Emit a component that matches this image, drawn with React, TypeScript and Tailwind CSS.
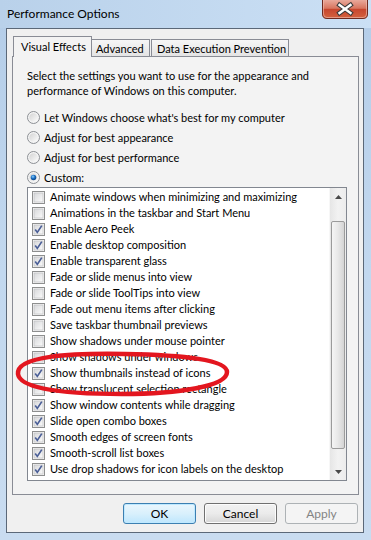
import type React from "react";

interface Effect {
	label: string;
	on: boolean;
}

const effects: Effect[] = [
	{ label: "Animate windows when minimizing and maximizing", on: false },
	{ label: "Animations in the taskbar and Start Menu", on: false },
	{ label: "Enable Aero Peek", on: true },
	{ label: "Enable desktop composition", on: true },
	{ label: "Enable transparent glass", on: true },
	{ label: "Fade or slide menus into view", on: false },
	{ label: "Fade or slide ToolTips into view", on: false },
	{ label: "Fade out menu items after clicking", on: false },
	{ label: "Save taskbar thumbnail previews", on: false },
	{ label: "Show shadows under mouse pointer", on: false },
	{ label: "Show shadows under windows", on: false },
	{ label: "Show thumbnails instead of icons", on: true },
	{ label: "Show translucent selection rectangle", on: false },
	{ label: "Show window contents while dragging", on: true },
	{ label: "Slide open combo boxes", on: true },
	{ label: "Smooth edges of screen fonts", on: true },
	{ label: "Smooth-scroll list boxes", on: true },
	{ label: "Use drop shadows for icon labels on the desktop", on: true },
];

const choices = [
	"Let Windows choose what's best for my computer",
	"Adjust for best appearance",
	"Adjust for best performance",
	"Custom:",
];

const CloseButton: React.FC = () => (
	<svg width="46" height="19" viewBox="0 0 46 19" className="mr-[3px] shrink-0">
		<defs>
			<linearGradient id="closeBg" x1="0" y1="0" x2="0" y2="1">
				<stop offset="0" stopColor="#e9a99b" />
				<stop offset="0.45" stopColor="#d8755f" />
				<stop offset="0.5" stopColor="#c7462e" />
				<stop offset="1" stopColor="#d5633f" />
			</linearGradient>
		</defs>
		<path
			d="M0.5 0 V14 Q0.5 18.5 5 18.5 H41 Q45.5 18.5 45.5 14 V0"
			fill="url(#closeBg)"
			stroke="#6e2a20"
		/>
		<path
			d="M1.5 0 V14 Q1.5 17.5 5 17.5 H41 Q44.5 17.5 44.5 14 V0"
			fill="none"
			stroke="#f0c2b6"
			strokeOpacity="0.6"
		/>
		<path
			d="M17.5 5 L28.5 13 M28.5 5 L17.5 13"
			stroke="#3b3b3b"
			strokeWidth="4.6"
			strokeLinecap="square"
		/>
		<path
			d="M17.5 5 L28.5 13 M28.5 5 L17.5 13"
			stroke="#ffffff"
			strokeWidth="2.4"
			strokeLinecap="square"
		/>
	</svg>
);

const Radio: React.FC<{ checked: boolean }> = ({ checked }) => (
	<svg width="13" height="13" viewBox="0 0 13 13" className="shrink-0">
		<defs>
			<linearGradient id="radioBg" x1="0" y1="0" x2="1" y2="1">
				<stop offset="0" stopColor="#d3d3d3" />
				<stop offset="1" stopColor="#fcfcfc" />
			</linearGradient>
			<radialGradient id="radioDot" cx="0.4" cy="0.35" r="0.7">
				<stop offset="0" stopColor="#8ad1ff" />
				<stop offset="0.5" stopColor="#1a6cc0" />
				<stop offset="1" stopColor="#0b3f7a" />
			</radialGradient>
		</defs>
		<circle cx="6.5" cy="6.5" r="6" fill="#f4f4f4" stroke="#8c8f94" />
		<circle cx="6.5" cy="6.5" r="4.3" fill="url(#radioBg)" />
		{checked && <circle cx="6.5" cy="6.5" r="2.8" fill="url(#radioDot)" />}
	</svg>
);

const CheckBox: React.FC<{ checked: boolean }> = ({ checked }) => (
	<svg width="13" height="13" viewBox="0 0 13 13" className="shrink-0">
		<defs>
			<linearGradient id="checkBg" x1="0" y1="0" x2="1" y2="1">
				<stop offset="0" stopColor="#d7d8da" />
				<stop offset="1" stopColor="#fbfbfb" />
			</linearGradient>
		</defs>
		<rect x="0.5" y="0.5" width="12" height="12" fill="#f6f6f6" stroke="#8e8f8f" />
		<rect x="2" y="2" width="9" height="9" fill="url(#checkBg)" stroke="#b8babd" strokeWidth="0.6" />
		{checked && (
			<path
				d="M3.2 6.6 L5.3 9.4 L9.8 2.6"
				fill="none"
				stroke="#4b5f97"
				strokeWidth="1.7"
			/>
		)}
	</svg>
);

const Arrow: React.FC<{ down?: boolean }> = ({ down }) => (
	<svg width="7" height="4" viewBox="0 0 7 4">
		<path d={down ? "M0 0 H7 L3.5 4 Z" : "M0 4 H7 L3.5 0 Z"} fill="#4a4a4a" />
	</svg>
);

export default function App() {
	return (
		<div className="relative w-[371px] h-[540px] overflow-hidden bg-gradient-to-b from-[#b4cde8] via-[#c2d8ef] to-[#c9dcf0] text-[11px] text-black font-['Lato',sans-serif]">
			<div className="flex h-[28px] items-start justify-between bg-gradient-to-r from-[#b9d1ea] to-[#cbe0f5]">
				<span className="pl-[7px] pt-[6px] leading-[16px] text-[12px]">Performance Options</span>
				<CloseButton />
			</div>

			<div className="ml-[6px] w-[358px] h-[505px] border border-[#5b6878] bg-[#f0f0f0] px-[5px] flex flex-col">
				{/* tabs */}
				<div className="mt-[7px] h-[20px] flex items-end whitespace-nowrap">
					<div className="relative z-10 ml-[1px] -mb-[1px] h-[21px] w-[79px] border border-b-0 border-[#898c95] bg-[#f3f3f3] pl-[7px] leading-[19px]">
						Visual Effects
					</div>
					<div className="h-[17px] w-[58px] border border-b-0 border-l-0 border-[#898c95] bg-gradient-to-b from-[#f6f6f6] to-[#e4e4e4] pl-[4px] leading-[17px]">
						Advanced
					</div>
					<div className="ml-[1px] h-[17px] w-[138px] border border-b-0 border-[#898c95] bg-gradient-to-b from-[#f6f6f6] to-[#e4e4e4] pl-[5px] leading-[17px]">
						Data Execution Prevention
					</div>
				</div>

				{/* tab page */}
				<div className="h-[439px] w-[347px] border border-[#898c95] bg-[#f3f3f3] pl-[14px] pt-[11px]">
					<p className="leading-[15px]">
						Select the settings you want to use for the appearance and
						<br />
						performance of Windows on this computer.
					</p>
					<div className="mt-[9px] flex flex-col">
						{choices.map((c, i) => (
							<div key={c} className="h-[20px] flex items-center gap-[4px]">
								<Radio checked={i === 3} />
								<span className="leading-[15px]">{c}</span>
							</div>
						))}
					</div>

					{/* list box */}
					<div className="h-[294px] w-[320px] border border-[#828790] bg-white flex">
						<div className="flex-1 pt-[1px] pl-[4px]">
							{effects.map((e) => (
								<div key={e.label} className="h-[16px] flex items-center gap-[5px] whitespace-nowrap">
									<CheckBox checked={e.on} />
									<span className="leading-[16px]">{e.label}</span>
								</div>
							))}
						</div>
						<div className="w-[17px] flex flex-col bg-gradient-to-r from-[#e6e6e6] via-[#f2f2f2] to-[#ececec] border-l border-[#f7f7f7]">
							<div className="h-[17px] flex items-center justify-center">
								<Arrow />
							</div>
							<div className="flex-1 flex flex-col pt-[16px] pb-[14px]">
								<div className="h-[228px] mx-[1px] rounded-[2px] border border-[#9b9b9b] bg-gradient-to-r from-[#f5f5f5] via-[#e8e8e8] to-[#d4d4d4]" />
							</div>
							<div className="h-[17px] flex items-center justify-center">
								<Arrow down />
							</div>
						</div>
					</div>
				</div>

				{/* buttons */}
				<div className="mt-[8px] flex justify-end gap-[8px]">
					<button
						type="button"
						className="h-[21px] w-[73px] rounded-[3px] border border-[#3c7fb1] bg-gradient-to-b from-[#eaf6fd] via-[#d9f0fc] to-[#bee6fd] shadow-[inset_0_0_0_1px_#bfe9ff] leading-[19px] text-[12px]"
					>
						OK
					</button>
					<button
						type="button"
						className="h-[21px] w-[73px] rounded-[3px] border border-[#707070] bg-gradient-to-b from-[#f2f2f2] via-[#ebebeb] to-[#d6d6d6] shadow-[inset_0_0_0_1px_#fcfcfc] leading-[19px] text-[12px]"
					>
						Cancel
					</button>
					<button
						type="button"
						className="h-[21px] w-[73px] rounded-[3px] border border-[#adb2b5] bg-[#f4f4f4] text-[#838383] leading-[19px] text-[12px]"
					>
						Apply
					</button>
				</div>
			</div>

			{/* red annotation */}
			<svg
				className="absolute left-0 top-0 pointer-events-none"
				width="371"
				height="540"
				viewBox="0 0 371 540"
			>
				<path
					d="M18 374 C16 356 70 353 125 354 C185 355 227 360 227 372 C227 386 180 394 122 394 C64 394 20 389 18 374 Z"
					fill="none"
					stroke="#e3161f"
					strokeWidth="4.5"
				/>
			</svg>
		</div>
	);
}
